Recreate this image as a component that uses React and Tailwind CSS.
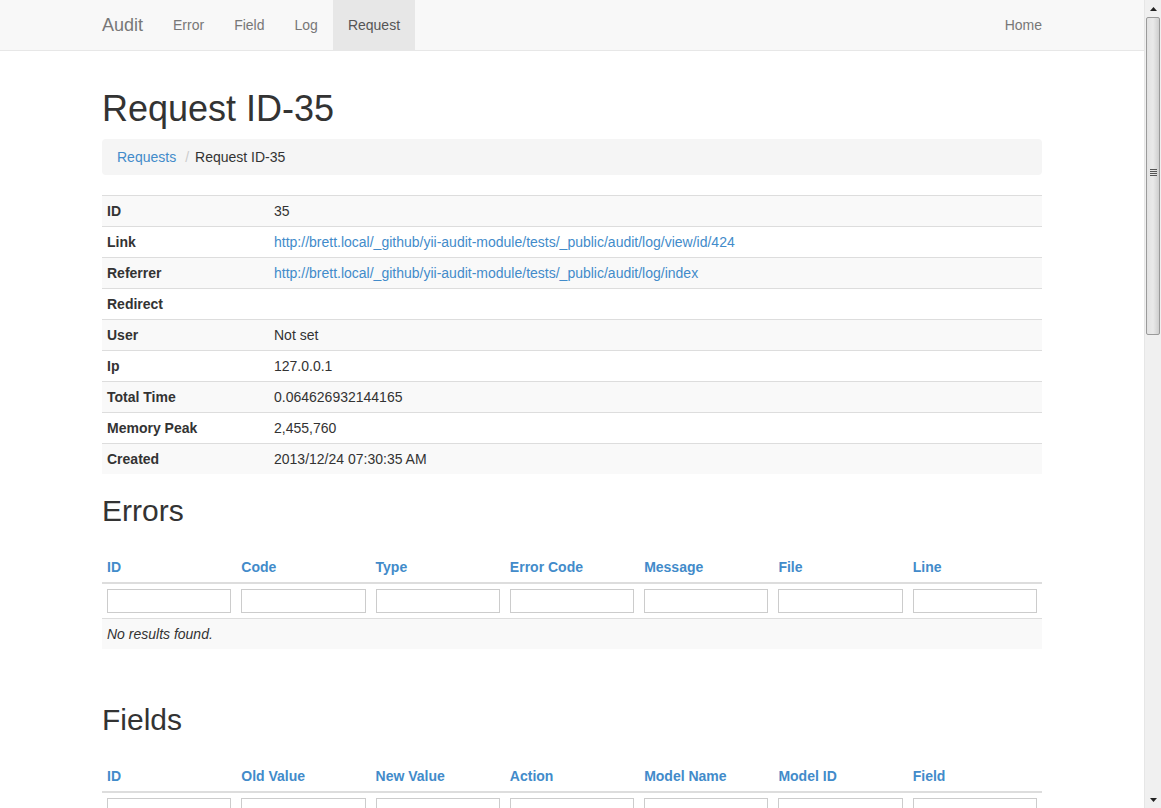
import React from "react";

const font = { fontFamily: '"Liberation Sans", Arial, Helvetica, sans-serif' };

const details = [
  ["ID", "35", false],
  ["Link", "http://brett.local/_github/yii-audit-module/tests/_public/audit/log/view/id/424", true],
  ["Referrer", "http://brett.local/_github/yii-audit-module/tests/_public/audit/log/index", true],
  ["Redirect", "", false],
  ["User", "Not set", false],
  ["Ip", "127.0.0.1", false],
  ["Total Time", "0.064626932144165", false],
  ["Memory Peak", "2,455,760", false],
  ["Created", "2013/12/24 07:30:35 AM", false],
];

function Grid({ cols, rows }) {
  return (
    <table className="w-full table-fixed border-collapse mt-[25px]">
      <thead>
        <tr className="border-b-2 border-[#ddd]">
          {cols.map((c) => (
            <th key={c} className="text-left px-[5px] py-[5px] leading-[20px] font-bold text-[#428bca] align-bottom">
              {c}
            </th>
          ))}
        </tr>
        <tr>
          {cols.map((c) => (
            <td key={c} className="px-[5px] py-[5px]">
              <input className="block w-full h-[24px] border border-[#ccc] bg-white outline-none" />
            </td>
          ))}
        </tr>
      </thead>
      {rows && (
        <tbody>
          <tr className="border-t border-[#ddd] bg-[#f9f9f9]">
            <td colSpan={cols.length} className="px-[5px] py-[5px] leading-[20px] italic text-[#333]">
              No results found.
            </td>
          </tr>
        </tbody>
      )}
    </table>
  );
}

function Scrollbar() {
  return (
    <div className="w-[17px] h-[808px] bg-[#f0f0f0] border-l border-[#e6e6e6] flex flex-col relative">
      <div className="h-[17px] flex items-center justify-center">
        <svg width="7" height="4" viewBox="0 0 7 4"><path d="M0 4 L3.5 0 L7 4 Z" fill="#222" /></svg>
      </div>
      <div className="mx-[1px] h-[318px] rounded-[2px] border border-[#9a9a9a] bg-gradient-to-r from-[#e2e2e2] via-[#eaeaea] to-[#cfcfcf] flex items-center justify-center">
        <div className="flex flex-col gap-[1px] mt-[-8px]">
          <div className="w-[7px] h-[1px] bg-[#555]" />
          <div className="w-[7px] h-[1px] bg-[#555]" />
          <div className="w-[7px] h-[1px] bg-[#555]" />
          <div className="w-[7px] h-[1px] bg-[#555]" />
        </div>
      </div>
      <div className="flex-1" />
      <div className="h-[17px] flex items-center justify-center">
        <svg width="7" height="4" viewBox="0 0 7 4"><path d="M0 0 L7 0 L3.5 4 Z" fill="#222" /></svg>
      </div>
    </div>
  );
}

export default function App() {
  return (
    <div style={font} className="w-[1161px] h-[808px] overflow-hidden flex bg-white text-[14px] text-[#333]">
      <div className="w-[1144px] h-[808px] overflow-hidden">
        <div className="h-[51px] bg-[#f8f8f8] border-b border-[#e7e7e7]">
          <div className="w-[940px] mx-auto flex h-[50px]">
            <span className="-ml-[15px] px-[15px] py-[15px] text-[18px] leading-[20px] text-[#777]">Audit</span>
            <span className="px-[15px] py-[15px] leading-[20px] text-[#777]">Error</span>
            <span className="px-[15px] py-[15px] leading-[20px] text-[#777]">Field</span>
            <span className="px-[15px] py-[15px] leading-[20px] text-[#777]">Log</span>
            <span className="px-[15px] py-[15px] leading-[20px] text-[#555] bg-[#e7e7e7]">Request</span>
            <div className="flex-1" />
            <span className="-mr-[15px] px-[15px] py-[15px] leading-[20px] text-[#777]">Home</span>
          </div>
        </div>
        <div className="w-[940px] mx-auto pt-[38px]">
          <h1 className="text-[36px] leading-[39.6px] font-normal text-[#333] mb-[10px]">Request ID-35</h1>
          <div className="bg-[#f5f5f5] rounded-[4px] px-[15px] py-[8px] leading-[20px] mb-[20px] flex">
            <span className="text-[#428bca]">Requests</span>
            <span className="text-[#ccc] px-[5px] ml-[4px] mr-[1px]">/</span>
            <span className="text-[#333]">Request ID-35</span>
          </div>
          <table className="w-full border-collapse">
            <tbody>
              {details.map(([k, v, link], i) => (
                <tr key={k} className={`border-t border-[#ddd] ${i % 2 === 0 ? "bg-[#f9f9f9]" : "bg-white"}`}>
                  <th className="w-[167px] text-left px-[5px] py-[5px] leading-[20px] font-bold text-[#333]">{k}</th>
                  <td className={`px-[5px] py-[5px] leading-[20px] ${link ? "text-[#428bca]" : "text-[#333]"}`}>{v}</td>
                </tr>
              ))}
            </tbody>
          </table>
          <h2 className="mt-[20px] text-[30px] leading-[33px] font-normal mb-[10px]">Errors</h2>
          <Grid cols={["ID", "Code", "Type", "Error Code", "Message", "File", "Line"]} rows />
          <h2 className="mt-[54px] text-[30px] leading-[33px] font-normal mb-[10px]">Fields</h2>
          <Grid cols={["ID", "Old Value", "New Value", "Action", "Model Name", "Model ID", "Field"]} rows={false} />
        </div>
      </div>
      <Scrollbar />
    </div>
  );
}
